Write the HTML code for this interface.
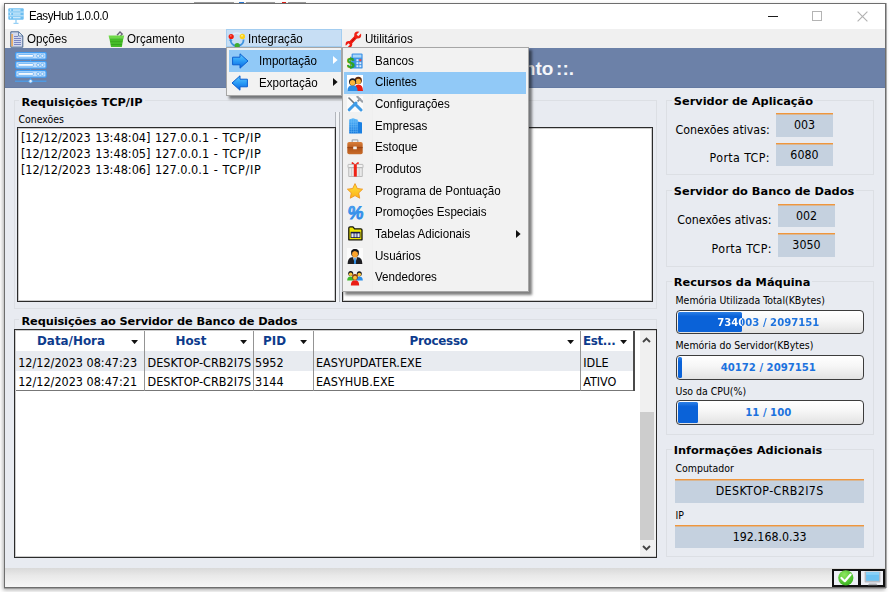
<!DOCTYPE html>
<html lang="pt-BR">
<head>
<meta charset="utf-8">
<title>EasyHub 1.0.0.0</title>
<style>
*{box-sizing:border-box;margin:0;padding:0}
html,body{width:890px;height:592px;overflow:hidden;background:#fff}
body{position:relative;font-family:"Liberation Sans","DejaVu Sans",sans-serif;color:#000}
.abs{position:absolute}
.ui{font-family:"Liberation Sans",sans-serif;font-size:13px;white-space:nowrap;color:#000;line-height:15px;transform:scaleX(.892);transform-origin:0 0;margin-top:-1px}
.th{font-family:"DejaVu Sans Condensed","Liberation Sans",sans-serif;white-space:nowrap;color:#000}
.tb{font-family:"DejaVu Sans","Liberation Sans",sans-serif;font-weight:bold;white-space:nowrap;color:#000}
#win{left:4px;top:3px;width:882px;height:585px;border:1px solid #6e6e6e;background:#e8ebf1;box-shadow:1px 0 0 rgba(120,120,120,.55),0 1px 0 rgba(120,120,120,.45),-1px 2px 4px rgba(0,0,0,.34)}
#title{left:5px;top:4px;width:880px;height:25px;background:#fff}
#menubar{left:5px;top:29px;width:880px;height:19px;background:#f0f0f0}
#band{left:5px;top:48px;width:880px;height:40px;background:#6c81a8;border-bottom:1px solid #647aa2}
.gb{border:1px solid #dcdfe4}
.gbt{font-size:11.35px;line-height:14px;background:#e8ebf1;padding:0 2px}
.lb{background:#fff;border:1px solid #2b2b2b;box-shadow:inset 0 0 0 1px rgba(0,0,0,.2)}
.val{background:#c5d1df;border-top:1px solid #f0963c;box-shadow:inset 0 1px 0 rgba(240,150,60,.45);text-align:center}
.lbl{font-size:12.3px;line-height:15px}
.sm{font-size:10.45px;line-height:13px}
.pb{border:1.3px solid #3c3c3c;border-radius:4px;background:linear-gradient(#ffffff 0%,#f6f6f6 45%,#e2e2e2 100%);overflow:hidden}
.pbf{left:1px;top:1px;bottom:1px;overflow:hidden;border-radius:1.5px;background:linear-gradient(#2c80e6 0%,#0a62d8 22%,#0a62d8 100%)}
.pbt{left:-1.5px;top:0;width:186.2px;height:21.8px;line-height:23.2px;text-align:center;color:#1c72de;font-family:"DejaVu Sans Condensed","Liberation Sans",sans-serif;font-weight:bold;font-size:11.25px;white-space:nowrap}
.menu{background:#f2f2f2;border:1px solid #a6a6a6;box-shadow:3px 3px 2.5px rgba(0,0,0,.5)}
.mi{left:0;right:0;height:21.65px}
.hl{background:#91c9f7}
.ws{letter-spacing:.7px}
.gh{font-size:11.9px;line-height:14px;color:#0d3b8c}
.gr{font-size:12.5px;line-height:15px}
</style>
</head>
<body>
<!-- remnants of window above -->
<div class="abs" style="left:194px;top:2px;width:40px;height:1px;background:#777;opacity:.7"></div>
<div class="abs" style="left:239px;top:2px;width:5px;height:1px;background:#2a7ad8"></div>
<div class="abs" style="left:246px;top:2px;width:29px;height:1px;background:#777;opacity:.7"></div>
<div class="abs" style="left:282px;top:2px;width:4px;height:1px;background:#e02018"></div>
<div class="abs" style="left:288px;top:2px;width:18px;height:1px;background:#777;opacity:.7"></div>
<div id="win" class="abs"></div>
<div id="title" class="abs"></div>
<div id="menubar" class="abs"></div>
<div id="band" class="abs"></div>

<!-- title bar -->
<div class="abs ui" style="left:29px;top:9px;letter-spacing:-0.5px">EasyHub 1.0.0.0</div>

<!-- menubar items -->
<div class="abs" style="left:226.3px;top:28.7px;width:116px;height:18.8px;background:#c7def4;border:1px solid #a3cdf0"></div>
<div class="abs ui" style="left:27px;top:31.5px">Opções</div>
<div class="abs ui" style="left:127px;top:31.5px">Orçamento</div>
<div class="abs ui" style="left:248px;top:31.5px">Integração</div>
<div class="abs ui" style="left:365px;top:31.5px">Utilitários</div>


<!-- ===== window controls ===== -->
<div class="abs" style="left:767.8px;top:15.6px;width:9.8px;height:1.3px;background:#1c1c1c"></div>
<div class="abs" style="left:812.2px;top:11px;width:9.8px;height:9.8px;border:1.1px solid #b4b4b4"></div>
<svg class="abs" style="left:857px;top:10.5px" width="11" height="11" viewBox="0 0 11 11"><path d="M0.6 0.6 L10.4 10.4 M10.4 0.6 L0.6 10.4" stroke="#b2b2b2" stroke-width="1.15" fill="none"/></svg>

<!-- ===== title icon ===== -->
<svg class="abs" style="left:8px;top:8px" width="16" height="17" viewBox="0 0 16 17">
<rect x="0.3" y="0.3" width="15.4" height="11.4" rx="1" fill="#6dbef1"/>
<rect x="0.3" y="3.6" width="15.4" height="0.9" fill="#d8eefb"/><rect x="0.3" y="7.4" width="15.4" height="0.9" fill="#d8eefb"/>
<rect x="5" y="1.5" width="7.5" height="1.1" fill="#e4f3fc"/><rect x="5" y="5.4" width="7.5" height="1.1" fill="#e4f3fc"/><rect x="5" y="9.2" width="7.5" height="1.1" fill="#e4f3fc"/>
<circle cx="2.6" cy="2" r="0.8" fill="#e4f3fc"/><circle cx="2.6" cy="5.9" r="0.8" fill="#e4f3fc"/><circle cx="2.6" cy="9.7" r="0.8" fill="#e4f3fc"/>
<rect x="7.5" y="11.7" width="1" height="3.2" fill="#6dbef1"/><rect x="5.5" y="14.8" width="5" height="1.1" fill="#8ccbf4"/>
</svg>

<!-- ===== menubar icons ===== -->
<svg class="abs" style="left:10px;top:31px" width="14" height="17" viewBox="0 0 14 17">
<path d="M0.8 0.8 H8.6 L12.8 5 V16.2 H0.8 Z" fill="#d3daee" stroke="#46648c" stroke-width="1"/>
<path d="M8.6 0.8 V5 H12.8 Z" fill="#f6f8fc" stroke="#4a6a96" stroke-width="0.8"/>
<rect x="1.4" y="3" width="1.4" height="12.4" fill="#f0a648"/>
<path d="M4 5.5 H8 M4 7.5 H11 M4 9.5 H11 M4 11.5 H11 M4 13.5 H11" stroke="#7a86c2" stroke-width="1"/>
</svg>
<svg class="abs" style="left:108px;top:31px" width="17" height="17" viewBox="0 0 17 17">
<path d="M9 4.2 L12 1 L14.2 3 L10.8 7" fill="none" stroke="#6a6078" stroke-width="1.3"/>
<path d="M0.6 4.6 H16.2 L15.6 7.4 H1.2 Z" fill="#6fd948"/>
<path d="M1.4 7.2 H15.4 L13.8 16 H3 Z" fill="#45bd28"/>
<path d="M2.4 10.6 H14.4" stroke="#3cab22" stroke-width="1"/><path d="M2.9 13.6 H13.9" stroke="#36a01e" stroke-width="1"/>
</svg>
<svg class="abs" style="left:228px;top:30.6px" width="18" height="18" viewBox="0 0 18 18">
<path d="M3.4 5 A6.6 6.6 0 0 1 14.4 5" fill="none" stroke="#dceffc" stroke-width="1.5"/>
<path d="M2.6 8.6 A6.6 6.6 0 0 0 8 15" fill="none" stroke="#3e92de" stroke-width="1.8"/>
<path d="M15.6 8.6 A6.6 6.6 0 0 1 10.4 15" fill="none" stroke="#3e92de" stroke-width="1.8"/>
<path d="M0.8 9.6 L2.6 7.4 L4.6 9.8 Z" fill="#3e92de"/><path d="M10.2 12.6 L10.4 16 L13.2 14.2 Z" fill="#3e92de"/>
<circle cx="3.2" cy="5.5" r="2.6" fill="#ee1c10"/><circle cx="2.8" cy="4.8" r="0.9" fill="#f87a66"/>
<circle cx="14.4" cy="5.5" r="2.7" fill="#fbd21a"/><circle cx="14" cy="4.7" r="1" fill="#fdee8a"/>
<circle cx="9.2" cy="14.6" r="2.6" fill="#3fae2e"/>
</svg>
<svg class="abs" style="left:345px;top:30.6px" width="17" height="17" viewBox="0 0 17 17">
<path d="M4.2 13 L12.4 4.4" stroke="#ee1a10" stroke-width="3.3" stroke-linecap="round"/>
<circle cx="12.7" cy="4.1" r="3.5" fill="#f02216"/>
<circle cx="3.9" cy="13.3" r="3.3" fill="#ee1a10"/>
<path d="M12.4 4.4 L16.6 0.2" stroke="#f0f0f0" stroke-width="2.4"/>
<path d="M4.2 13 L0.2 17" stroke="#f0f0f0" stroke-width="2.3"/>
<path d="M7 10 L9.6 7.4" stroke="#b80c06" stroke-width="1" stroke-linecap="round"/>
</svg>

<!-- ===== band icon ===== -->
<svg class="abs" style="left:15px;top:52px" width="32" height="32" viewBox="0 0 32 32">
<rect x="0.7" y="0.60" width="30.4" height="6.5" rx="1.2" fill="#c4dffb" stroke="#3f9bf2" stroke-width="1.3"/><rect x="3" y="2.50" width="15.4" height="2.7" rx="0.9" fill="#fff" stroke="#4da4f4" stroke-width="0.7"/><circle cx="23.2" cy="3.85" r="1.6" fill="#dcedfd" stroke="#62aef4" stroke-width="0.8"/><circle cx="27.4" cy="3.85" r="1.6" fill="#dcedfd" stroke="#62aef4" stroke-width="0.8"/>
<rect x="0.7" y="9.65" width="30.4" height="6.5" rx="1.2" fill="#c4dffb" stroke="#3f9bf2" stroke-width="1.3"/><rect x="3" y="11.55" width="15.4" height="2.7" rx="0.9" fill="#fff" stroke="#4da4f4" stroke-width="0.7"/><circle cx="23.2" cy="12.90" r="1.6" fill="#dcedfd" stroke="#62aef4" stroke-width="0.8"/><circle cx="27.4" cy="12.90" r="1.6" fill="#dcedfd" stroke="#62aef4" stroke-width="0.8"/>
<rect x="0.7" y="18.70" width="30.4" height="6.5" rx="1.2" fill="#c4dffb" stroke="#3f9bf2" stroke-width="1.3"/><rect x="3" y="20.60" width="15.4" height="2.7" rx="0.9" fill="#fff" stroke="#4da4f4" stroke-width="0.7"/><circle cx="23.2" cy="21.95" r="1.6" fill="#dcedfd" stroke="#62aef4" stroke-width="0.8"/><circle cx="27.4" cy="21.95" r="1.6" fill="#dcedfd" stroke="#62aef4" stroke-width="0.8"/>
<path d="M15.6 7.4 V9.4 M15.6 16.4 V18.4 M15.6 25.4 V29" stroke="#4a9fee" stroke-width="1"/>
<path d="M0 29.2 H31.4" stroke="#4a9fee" stroke-width="1.2"/><circle cx="15.6" cy="29.2" r="1.8" fill="#e4f1fe" stroke="#4a9fee" stroke-width="0.8"/>
</svg>

<!-- band text -->
<div class="abs" style="right:316px;top:56.6px;font-family:'Liberation Sans',sans-serif;font-weight:bold;font-size:19px;line-height:24px;color:#f4f6fa;white-space:nowrap;word-spacing:-2.6px">nto ::.</div>


<!-- ===== left top group: Requisições TCP/IP ===== -->
<div class="abs gb" style="left:13.5px;top:100.3px;width:643.5px;height:209px"></div>
<div class="abs tb gbt" style="left:19.4px;top:94.5px">Requisições TCP/IP</div>
<div class="abs th sm" style="left:18.5px;top:112.5px">Conexões</div>
<div class="abs" style="left:335px;top:112px;width:5px;height:190.4px;background:#f1f3f6;border-left:1px solid #b2b6bc;border-right:1px solid #b2b6bc"></div>
<div class="abs lb" style="left:16.5px;top:126.8px;width:319.5px;height:175.5px"></div>
<div class="abs th" style="left:20.9px;top:130.2px;font-size:12.6px;line-height:15.65px;word-spacing:1px">[12/12/2023 13:48:04] 127.0.0.1 - <span class="ws">TCP/IP</span><br>[12/12/2023 13:48:05] 127.0.0.1 - <span class="ws">TCP/IP</span><br>[12/12/2023 13:48:06] 127.0.0.1 - <span class="ws">TCP/IP</span></div>
<div class="abs lb" style="left:341.6px;top:126.8px;width:311.4px;height:175.5px"></div>

<!-- ===== left bottom group: grid ===== -->
<div class="abs gb" style="left:13.5px;top:319.2px;width:643.5px;height:239px"></div>
<div class="abs tb gbt" style="left:19.4px;top:313.6px;letter-spacing:-0.09px">Requisições ao Servidor de Banco de Dados</div>
<div class="abs" style="left:14.2px;top:329.2px;width:643px;height:228.6px;background:#fff;border:1px solid #2b2b2b;box-shadow:inset 0 0 0 1px rgba(0,0,0,.2)"></div>
<!-- scrollbar -->
<div class="abs" style="left:639.6px;top:330.6px;width:16.2px;height:225.8px;background:#f0f0f0"></div>
<div class="abs" style="left:639.6px;top:412px;width:14.6px;height:127.6px;background:#cdcdcd"></div>
<svg class="abs" style="left:642.2px;top:336.8px" width="9" height="6" viewBox="0 0 9 6"><path d="M1 5 L4.5 1.5 L8 5" fill="none" stroke="#454545" stroke-width="1.9"/></svg>
<svg class="abs" style="left:642.2px;top:545px" width="9" height="6" viewBox="0 0 9 6"><path d="M1 1 L4.5 4.5 L8 1" fill="none" stroke="#454545" stroke-width="1.9"/></svg>
<!-- grid rows -->
<div class="abs" style="left:15.7px;top:351px;width:617.3px;height:20px;background:#e8ebf0"></div>
<div class="abs" style="left:15.7px;top:389.6px;width:619.3px;height:1.2px;background:#777"></div>
<div class="abs" style="left:144.1px;top:330.6px;width:1px;height:60px;background:#949494"></div>
<div class="abs" style="left:252.5px;top:330.6px;width:1px;height:60px;background:#949494"></div>
<div class="abs" style="left:313.1px;top:330.6px;width:1px;height:60px;background:#949494"></div>
<div class="abs" style="left:580.1px;top:330.6px;width:1px;height:60px;background:#949494"></div>
<div class="abs" style="left:633px;top:330.6px;width:2px;height:60.4px;background:#4a4a4a"></div>
<div class="abs tb gh" style="left:37px;top:334.3px">Data/Hora</div>
<div class="abs tb gh" style="left:175.5px;top:334.3px">Host</div>
<div class="abs tb gh" style="left:263px;top:334.3px">PID</div>
<div class="abs tb gh" style="left:409.5px;top:334.3px;letter-spacing:-0.25px">Processo</div>
<div class="abs tb gh" style="left:583px;top:334.3px;letter-spacing:-0.35px">Est...</div>
<div class="abs th gr" style="left:18.2px;top:354.5px">12/12/2023 08:47:23</div>
<div class="abs th gr" style="left:18.2px;top:374.1px">12/12/2023 08:47:21</div>
<div class="abs th gr" style="left:147.5px;top:354.5px">DESKTOP-CRB2I7S</div>
<div class="abs th gr" style="left:147.5px;top:374.1px">DESKTOP-CRB2I7S</div>
<div class="abs th gr" style="left:255px;top:354.5px">5952</div>
<div class="abs th gr" style="left:255px;top:374.1px">3144</div>
<div class="abs th gr" style="left:316px;top:354.5px">EASYUPDATER.EXE</div>
<div class="abs th gr" style="left:316px;top:374.1px">EASYHUB.EXE</div>
<div class="abs th gr" style="left:583.2px;top:354.5px">IDLE</div>
<div class="abs th gr" style="left:583.2px;top:374.1px">ATIVO</div>
<svg class="abs dd" style="left:131.1px;top:339.6px" width="7.2" height="4.3" viewBox="0 0 8 5"><path d="M0 0 H8 L4 4.8 Z" fill="#111"/></svg>
<svg class="abs dd" style="left:239.6px;top:339.6px" width="7.2" height="4.3" viewBox="0 0 8 5"><path d="M0 0 H8 L4 4.8 Z" fill="#111"/></svg>
<svg class="abs dd" style="left:299.8px;top:339.6px" width="7.2" height="4.3" viewBox="0 0 8 5"><path d="M0 0 H8 L4 4.8 Z" fill="#111"/></svg>
<svg class="abs dd" style="left:567.1px;top:339.6px" width="7.2" height="4.3" viewBox="0 0 8 5"><path d="M0 0 H8 L4 4.8 Z" fill="#111"/></svg>
<svg class="abs dd" style="left:620.3px;top:339.6px" width="7.2" height="4.3" viewBox="0 0 8 5"><path d="M0 0 H8 L4 4.8 Z" fill="#111"/></svg>


<!-- ===== right panel ===== -->
<div class="abs gb" style="left:666px;top:99.8px;width:208px;height:75.6px"></div>
<div class="abs tb gbt" style="left:671.8px;top:94.2px">Servidor de Aplicação</div>
<div class="abs th lbl" style="left:675.5px;top:122.7px">Conexões ativas:</div>
<div class="abs val th lbl" style="left:776.3px;top:112.8px;width:56.3px;height:23.8px;line-height:22.6px">003</div>
<div class="abs th lbl" style="left:709.6px;top:150.5px;letter-spacing:.4px">Porta TCP:</div>
<div class="abs val th lbl" style="left:776.3px;top:142.6px;width:56.3px;height:23.6px;line-height:22.6px">6080</div>

<div class="abs gb" style="left:666px;top:190px;width:208px;height:77px"></div>
<div class="abs tb gbt" style="left:671.8px;top:184.2px">Servidor do Banco de Dados</div>
<div class="abs th lbl" style="left:677.3px;top:213.1px">Conexões ativas:</div>
<div class="abs val th lbl" style="left:778.3px;top:203.8px;width:56.3px;height:23.4px;line-height:22.6px">002</div>
<div class="abs th lbl" style="left:711.6px;top:241.9px;letter-spacing:.4px">Porta TCP:</div>
<div class="abs val th lbl" style="left:778.3px;top:233.2px;width:56.3px;height:23.4px;line-height:22.6px">3050</div>

<div class="abs gb" style="left:666px;top:281px;width:208px;height:154px"></div>
<div class="abs tb gbt" style="left:671.8px;top:275.4px">Recursos da Máquina</div>
<div class="abs th sm" style="left:675.5px;top:293.6px">Memória Utilizada Total(KBytes)</div>
<div class="abs pb" style="left:675.7px;top:309.6px;width:188.8px;height:24.4px"><div class="abs pbf" style="width:64.6px"></div><div class="abs pbt" style="background:linear-gradient(90deg,#fff 0,#fff 67.1px,#1c72de 67.1px,#1c72de 100%);-webkit-background-clip:text;background-clip:text;color:transparent;z-index:2">734003 / 2097151</div></div>
<div class="abs th sm" style="left:675.5px;top:339.4px">Memória do Servidor(KBytes)</div>
<div class="abs pb" style="left:675.7px;top:355.2px;width:188.8px;height:24.4px"><div class="abs pbf" style="width:4.2px"></div><div class="abs pbt">40172 / 2097151</div></div>
<div class="abs th sm" style="left:675.5px;top:385px">Uso da CPU(%)</div>
<div class="abs pb" style="left:675.7px;top:400.4px;width:188.8px;height:24.4px"><div class="abs pbf" style="width:20.8px"></div><div class="abs pbt">11 / 100</div></div>

<div class="abs gb" style="left:666px;top:449px;width:208px;height:108px"></div>
<div class="abs tb gbt" style="left:671.8px;top:443.2px">Informações Adicionais</div>
<div class="abs th sm" style="left:675.5px;top:462.1px">Computador</div>
<div class="abs val th lbl" style="left:674.9px;top:479.2px;width:189.6px;height:23.8px;line-height:23.6px;letter-spacing:.4px">DESKTOP-CRB2I7S</div>
<div class="abs th sm" style="left:675.5px;top:509.3px">IP</div>
<div class="abs val th lbl" style="left:674.9px;top:524.8px;width:189.6px;height:23.6px;line-height:23.4px">192.168.0.33</div>

<!-- ===== status bar ===== -->
<div class="abs" style="left:5px;top:568px;width:880px;height:19px;background:linear-gradient(#d9d9d9 0%,#e9e9e9 40%,#f6f6f6 100%)"></div>
<div class="abs" style="left:832.2px;top:568.6px;width:52.6px;height:18px;background:#111"></div>
<div class="abs" style="left:834.2px;top:570.6px;width:23.4px;height:14.2px;background:#eef0f6"></div>
<div class="abs" style="left:860.5px;top:570.6px;width:22.4px;height:14.2px;background:#eef0f6"></div>
<svg class="abs" style="left:837.6px;top:569.8px" width="16" height="16" viewBox="0 0 16 16">
<defs><radialGradient id="gc" cx="0.4" cy="0.3" r="0.8"><stop offset="0" stop-color="#8fe860"/><stop offset="1" stop-color="#2fae16"/></radialGradient></defs>
<circle cx="7.8" cy="7.8" r="7.6" fill="url(#gc)"/>
<path d="M3.4 8 L6.8 11.2 L12.6 4.6" fill="none" stroke="#fff" stroke-width="2.2" stroke-linecap="round" stroke-linejoin="round"/>
</svg>
<svg class="abs" style="left:863.6px;top:570.8px" width="17" height="15" viewBox="0 0 17 15">
<rect x="0.6" y="0.4" width="15.8" height="11.2" rx="0.8" fill="#b9bcc2"/>
<rect x="2.1" y="1.2" width="13" height="8.6" fill="#6cc2f2"/><rect x="2.1" y="1.2" width="13" height="2.6" fill="#8ad2f8"/>
<path d="M5 12.6 H12.4 L13.6 14.2 H3.8 Z" fill="#a9acb2"/>
</svg>

<!-- ===== submenu 1 (Integração) ===== -->
<div class="abs menu" style="left:226px;top:47px;width:116px;height:49px">
<div class="abs mi hl" style="top:2px;left:2px;right:0px;height:22px"></div>
<svg class="abs" style="left:4.7px;top:4.6px" width="17" height="16" viewBox="0 0 17 16"><defs><linearGradient id="ag" x1="0" y1="0" x2="0" y2="1"><stop offset="0" stop-color="#63ccff"/><stop offset="0.5" stop-color="#2a9cf6"/><stop offset="1" stop-color="#0a66e0"/></linearGradient></defs>
<path d="M0.6 4.2 H8 V0.8 L16 8 L8 15.2 V11.8 H0.6 Z" fill="url(#ag)" stroke="#0b5fd0" stroke-width="1" stroke-linejoin="round"/></svg>
<svg class="abs" style="left:4.3px;top:26.6px" width="17" height="16" viewBox="0 0 17 16">
<path d="M16.4 4.2 H9 V0.8 L1 8 L9 15.2 V11.8 H16.4 Z" fill="url(#ag)" stroke="#0b5fd0" stroke-width="1" stroke-linejoin="round"/></svg>
<div class="abs ui" style="left:32.4px;top:6px">Importação</div>
<div class="abs ui" style="left:32.4px;top:27.7px">Exportação</div>
<svg class="abs" style="left:106.2px;top:8.1px" width="5" height="8" viewBox="0 0 5 8"><path d="M0 0 L4.6 4 L0 8 Z" fill="#fff"/></svg>
<svg class="abs" style="left:106.2px;top:29.9px" width="5" height="8" viewBox="0 0 5 8"><path d="M0 0 L4.6 4 L0 8 Z" fill="#111"/></svg>
</div>
<!-- ===== submenu 2 (Importação) ===== -->
<div class="abs menu" style="left:342px;top:47px;width:187px;height:244.6px">
<div class="abs" style="left:0;top:0;width:29.5px;bottom:0;background:#f1f1f1;border-right:1px solid #efefef"></div>
<div class="abs mi" style="top:2.90px;left:1.6px;right:1.8px"></div>
<div class="abs ui" style="left:31.9px;top:5.80px">Bancos</div>
<div class="abs mi hl" style="top:24px;left:1.4px;right:2px;height:21.5px"></div>
<div class="abs ui" style="left:31.9px;top:27.45px">Clientes</div>
<div class="abs mi" style="top:46.20px;left:1.6px;right:1.8px"></div>
<div class="abs ui" style="left:31.9px;top:49.10px">Configurações</div>
<div class="abs mi" style="top:67.85px;left:1.6px;right:1.8px"></div>
<div class="abs ui" style="left:31.9px;top:70.75px">Empresas</div>
<div class="abs mi" style="top:89.50px;left:1.6px;right:1.8px"></div>
<div class="abs ui" style="left:31.9px;top:92.40px">Estoque</div>
<div class="abs mi" style="top:111.15px;left:1.6px;right:1.8px"></div>
<div class="abs ui" style="left:31.9px;top:114.05px">Produtos</div>
<div class="abs mi" style="top:132.80px;left:1.6px;right:1.8px"></div>
<div class="abs ui" style="left:31.9px;top:135.70px">Programa de Pontuação</div>
<div class="abs mi" style="top:154.45px;left:1.6px;right:1.8px"></div>
<div class="abs ui" style="left:31.9px;top:157.35px">Promoções Especiais</div>
<div class="abs mi" style="top:176.10px;left:1.6px;right:1.8px"></div>
<div class="abs ui" style="left:31.9px;top:179.00px">Tabelas Adicionais</div>
<div class="abs mi" style="top:197.75px;left:1.6px;right:1.8px"></div>
<div class="abs ui" style="left:31.9px;top:200.65px">Usuários</div>
<div class="abs mi" style="top:219.40px;left:1.6px;right:1.8px"></div>
<div class="abs ui" style="left:31.9px;top:222.30px">Vendedores</div>
<svg class="abs" style="left:4.0px;top:4.8px" width="16" height="16" viewBox="0 0 16 16">
<rect x="4.6" y="0.4" width="11" height="15.2" rx="1.2" fill="#3f93e6"/><rect x="5.8" y="1.6" width="8.6" height="3" fill="#a8d6fa"/>
<g fill="#dcecfb"><rect x="9.4" y="6.2" width="2" height="2"/><rect x="12.3" y="6.2" width="2" height="2" fill="#f0483a"/><rect x="9.4" y="9.2" width="2" height="2"/><rect x="12.3" y="9.2" width="2" height="2"/><rect x="9.4" y="12.2" width="2" height="2"/><rect x="12.3" y="12.2" width="2" height="2"/></g>
<text x="-0.3" y="15" font-family="Liberation Sans, sans-serif" font-weight="bold" font-size="14.5" fill="#2fae22" stroke="#1f8a18" stroke-width="0.4">$</text></svg>
<svg class="abs" style="left:4.0px;top:26.8px" width="16" height="16" viewBox="0 0 16 16">
<rect width="16" height="16" fill="#fff"/>
<path d="M7 16 Q7 9.4 11.4 9.4 Q16 9.4 16 16 Z" fill="#e81c14"/>
<circle cx="11.3" cy="5.4" r="3.6" fill="#5a2a10"/><circle cx="11.3" cy="6.4" r="2.6" fill="#f8b238"/>
<path d="M0.4 16 Q0.4 10.2 5.6 10.2 Q10.6 10.2 10.6 16 Z" fill="#2a8ce6"/>
<circle cx="5.6" cy="6.8" r="3.6" fill="#1c1c24"/><circle cx="5.6" cy="7.8" r="2.7" fill="#fbb63a"/>
</svg>
<svg class="abs" style="left:4.0px;top:48.2px" width="16" height="16" viewBox="0 0 16 16">
<rect width="16" height="16" fill="#fafafa"/>
<path d="M2 2 L8 8" stroke="#707880" stroke-width="1.6" stroke-linecap="round"/>
<path d="M8 8 L14 14" stroke="#3f9be6" stroke-width="3" stroke-linecap="round"/>
<path d="M10.6 5.4 L13.6 2.4" stroke="#8a9096" stroke-width="1.8"/><path d="M10.4 0.8 L15.4 5.6" stroke="#9aa0a8" stroke-width="2.2" stroke-linecap="round"/>
<path d="M9 7 L2.2 13.8" stroke="#3f9be6" stroke-width="3" stroke-linecap="round"/>
</svg>
<svg class="abs" style="left:4.0px;top:69.8px" width="16" height="16" viewBox="0 0 16 16">
<defs><linearGradient id="bg1" x1="0" y1="0" x2="0" y2="1"><stop offset="0" stop-color="#58b8fa"/><stop offset="1" stop-color="#0e74dc"/></linearGradient></defs>
<path d="M2.2 15.6 V1.6 L6 0.2 L10.8 1.8 V15.6 Z" fill="url(#bg1)"/><path d="M10.8 3.6 L15 4.6 V15.4 H10.8 Z" fill="#1a80e2"/>
<path d="M2.2 4 H10.8 M2.2 6.4 H10.8 M2.2 8.8 H10.8 M2.2 11.2 H10.8 M2.2 13.6 H10.8 M4.4 1 V15.6 M6.6 0.4 V15.6 M8.8 1.2 V15.6" stroke="#7cc6fb" stroke-width="0.5" opacity="0.8"/>
</svg>
<svg class="abs" style="left:4.0px;top:91.4px" width="16" height="16" viewBox="0 0 16 16">
<defs><linearGradient id="br1" x1="0" y1="0" x2="0" y2="1"><stop offset="0" stop-color="#d9803c"/><stop offset="0.55" stop-color="#b4561a"/><stop offset="1" stop-color="#c86c2a"/></linearGradient></defs>
<path d="M5.2 3.4 V1.6 Q5.2 0.8 6 0.8 H10 Q10.8 0.8 10.8 1.6 V3.4" fill="none" stroke="#a8aeb6" stroke-width="1.3"/>
<rect x="0.3" y="3" width="15.4" height="12.2" rx="1.8" fill="url(#br1)"/>
<path d="M0.3 8.6 H15.7" stroke="#8e3e10" stroke-width="0.8"/>
<rect x="6.2" y="7.6" width="3.6" height="2.6" rx="0.5" fill="#f4f0ea"/>
</svg>
<svg class="abs" style="left:4.0px;top:112.8px" width="17" height="16" viewBox="0 0 17 16">
<path d="M8.2 3.6 Q5 -0.4 4.6 2 Q4.4 3.6 8.2 3.6 Q12 3.6 11.8 2 Q11.4 -0.4 8.2 3.6" fill="#f02216"/>
<rect x="1" y="3.4" width="15" height="3.4" rx="0.6" fill="#f2f2f2" stroke="#a6a6a6" stroke-width="0.7"/>
<rect x="1.8" y="6.8" width="13.4" height="8.6" fill="#e9e9e9" stroke="#a6a6a6" stroke-width="0.7"/>
<path d="M4.6 7 V15.2 M12.2 7 V15.2" stroke="#c4c4c4" stroke-width="0.8"/>
<rect x="6.8" y="3.2" width="3" height="12.4" fill="#f02216"/>
</svg>
<svg class="abs" style="left:4.0px;top:134.8px" width="16" height="16" viewBox="0 0 16 16">
<defs><linearGradient id="st1" x1="0" y1="0" x2="0" y2="1"><stop offset="0" stop-color="#ffe23a"/><stop offset="1" stop-color="#fbb018"/></linearGradient></defs>
<path d="M8 0.6 L10.3 5.5 L15.6 6.2 L11.7 9.9 L12.7 15.2 L8 12.6 L3.3 15.2 L4.3 9.9 L0.4 6.2 L5.7 5.5 Z" fill="url(#st1)" stroke="#ee9420" stroke-width="0.9" stroke-linejoin="round"/>
</svg>
<svg class="abs" style="left:3.6px;top:156.4px" width="17" height="17" viewBox="0 0 17 17">
<defs><linearGradient id="pg" x1="0" y1="0" x2="0" y2="1"><stop offset="0" stop-color="#5cb4f6"/><stop offset="1" stop-color="#1f78e0"/></linearGradient></defs>
<text x="0.2" y="15.4" transform="skewX(-6) translate(1.6 0)" font-family="Liberation Sans, sans-serif" font-weight="bold" font-size="18.5" fill="url(#pg)" stroke="#2f8eea" stroke-width="0.8" textLength="15.6" lengthAdjust="spacingAndGlyphs">%</text>
</svg>
<svg class="abs" style="left:5.0px;top:178.4px" width="15" height="15" viewBox="0 0 15 15">
<path d="M0.8 13.8 V2.4 Q0.8 0.9 2.2 0.9 H5 L6.6 2.8 H12.8 Q14 2.8 14 4 V13.8 Z" fill="#eee600" stroke="#15150a" stroke-width="1.3" stroke-linejoin="round"/>
<rect x="2.6" y="5.8" width="9.8" height="6.2" fill="#181a44"/>
<rect x="3.4" y="7.4" width="2.2" height="3.8" fill="#e8ecf6"/><rect x="6.4" y="7.4" width="2.2" height="3.8" fill="#c8d0ea"/><rect x="9.4" y="7.4" width="2.2" height="3.8" fill="#e8ecf6"/>
</svg>
<svg class="abs" style="left:4.0px;top:199.6px" width="16" height="16" viewBox="0 0 16 16">
<rect width="16" height="16" fill="#fbfbfb"/>
<path d="M0.6 16 Q0.6 9.6 5 9.2 L8 9 L11 9.2 Q15.4 9.6 15.4 16 Z" fill="#1e1e22"/>
<path d="M6 9.2 L8 16 L10 9.2 Z" fill="#f4f6fa"/><path d="M7.3 10 H8.7 L9.1 15.4 L8 16 L6.9 15.4 Z" fill="#2e8ee6"/>
<circle cx="8" cy="5" r="3.9" fill="#17171c"/><ellipse cx="8" cy="6.2" rx="2.9" ry="3.1" fill="#fba42c"/>
<path d="M4.4 4.4 Q8 1.4 11.6 4.6 L11.4 2.6 Q8 -0.6 4.6 2.6 Z" fill="#17171c"/>
</svg>
<svg class="abs" style="left:4.0px;top:222.2px" width="16" height="16" viewBox="0 0 16 16">
<path d="M0.2 10.4 Q0.2 6.6 3.6 6.6 Q7 6.6 7 10.4 Z" fill="#3cb82c"/><circle cx="3.7" cy="3.6" r="2.5" fill="#1a1a1e"/><circle cx="3.7" cy="4.3" r="1.8" fill="#fbc43a"/>
<path d="M9 10.4 Q9 6.6 12.4 6.6 Q15.8 6.6 15.8 10.4 Z" fill="#2a90ea"/><circle cx="12.3" cy="3.8" r="2.5" fill="#1a1a1e"/><circle cx="12.3" cy="4.5" r="1.8" fill="#fbc43a"/>
<path d="M3.8 15.4 Q3.8 10.2 8 10.2 Q12.2 10.2 12.2 15.4 Z" fill="#ea1c14"/><circle cx="8" cy="7" r="2.9" fill="#8a3c10"/><circle cx="8" cy="7.8" r="2" fill="#fbc43a"/>
</svg>
<svg class="abs" style="left:172.5px;top:182.4px" width="5" height="8" viewBox="0 0 5 8"><path d="M0 0 L4.6 4 L0 8 Z" fill="#111"/></svg>
</div>

</body>
</html>
